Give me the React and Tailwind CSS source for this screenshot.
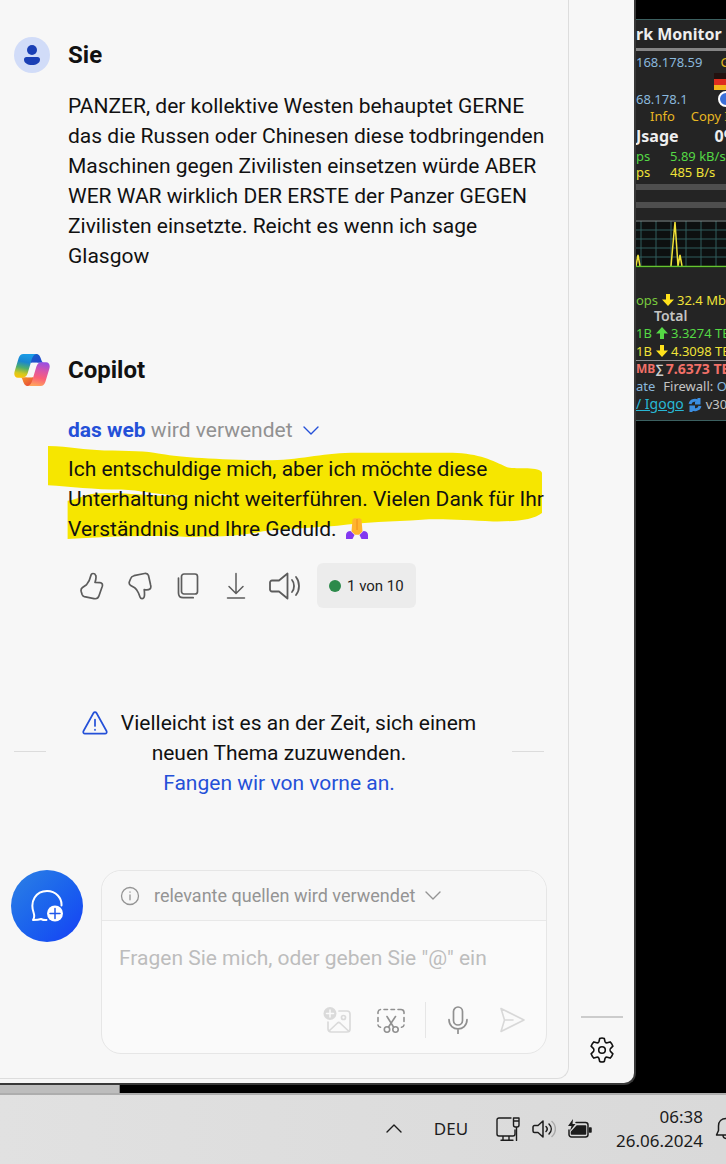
import { useState } from 'react';

const question =
  'PANZER, der kollektive Westen behauptet GERNE das die Russen oder Chinesen diese todbringenden Maschinen gegen Zivilisten einsetzen würde ABER WER WAR wirklich DER ERSTE der Panzer GEGEN Zivilisten einsetzte. Reicht es wenn ich sage Glasgow';

const stroke = {
  fill: 'none',
  stroke: 'currentColor',
  strokeLinecap: 'round',
  strokeLinejoin: 'round'
};

function UserAvatar() {
  return (
    <svg className="size-9 shrink-0" viewBox="0 0 36 36" aria-hidden="true">
      <circle cx="18" cy="18" r="18" fill="#d1dcf8" />
      <circle cx="18" cy="13" r="5" fill="#1a3fb5" />
      <path d="M12.500 20h11a2.500 2.500 0 0 1 2.500 2.500c0 3.600-3.600 5.500-8 5.500s-8-1.900-8-5.500a2.500 2.500 0 0 1 2.500-2.500z" fill="#1a3fb5" />
    </svg>
  );
}

function CopilotLogo() {
  return (
    <svg className="h-8 w-9 shrink-0" viewBox="0 0 108 96" aria-hidden="true">
      <defs>
        <linearGradient id="cool" x1="0.6" y1="0" x2="0.4" y2="1">
          <stop offset="0" stopColor="#1b9ee8" />
          <stop offset="0.35" stopColor="#1a86d0" />
          <stop offset="0.6" stopColor="#4fae6c" />
          <stop offset="0.85" stopColor="#d3c91f" />
          <stop offset="1" stopColor="#f6c40c" />
        </linearGradient>
        <linearGradient id="warm" x1="0.6" y1="0" x2="0.4" y2="1">
          <stop offset="0" stopColor="#9a50e0" />
          <stop offset="0.35" stopColor="#d955a8" />
          <stop offset="0.65" stopColor="#fa5f78" />
          <stop offset="1" stopColor="#ffa35c" />
        </linearGradient>
        <linearGradient id="navy" x1="0" y1="0" x2="1" y2="1">
          <stop offset="0" stopColor="#1765c8" />
          <stop offset="1" stopColor="#2543cf" />
        </linearGradient>
        <linearGradient id="ember" x1="0" y1="0" x2="1" y2="1">
          <stop offset="0" stopColor="#f79a28" />
          <stop offset="1" stopColor="#e4403c" />
        </linearGradient>
      </defs>
      <path d="M50 0h16c10 0 13 8 16 18 2 6 4 8 8 8H50z" fill="url(#navy)" />
      <path d="M58 96H42c-10 0-13-8-16-18-2-6-4-8-8-8h40z" fill="url(#ember)" />
      <path d="M54 26h16L54 70H38z" fill="#f7f7f7" />
      <path d="M28 0h40c-10 2-13 10-17 24l-10 34c-3 9-8 13-17 13H12C2 71-1 62 2 52l12-40C17 4 21 0 28 0z" fill="url(#cool)" />
      <path d="M80 96H40c10-2 13-10 17-24l10-34c3-9 8-13 17-13h12c10 0 13 9 10 19L94 84c-3 8-7 12-14 12z" fill="url(#warm)" />
    </svg>
  );
}

function Chevron({ className }) {
  return (
    <svg className={className} viewBox="0 0 16 9" {...stroke} strokeWidth="1.4" aria-hidden="true">
      <path d="M1 1l7 7 7-7" />
    </svg>
  );
}

// marker strokes behind the answer
function Marker() {
  return (
    <svg className="absolute -left-5 -top-2 -z-10 h-[94px] w-[495px]" viewBox="24 16 1464 278" fill="#f6e600" aria-hidden="true">
      <path d="M24 16C90 17 130 28 190 29C260 30 320 30 350 38C400 47 500 55 640 58C760 62 820 38 920 36H1220C1300 38 1340 60 1380 78C1400 86 1480 74 1485 95V214C1460 235 1400 240 1340 239C1260 235 1180 230 1130 234C1040 240 960 240 880 252C800 258 740 260 660 268C580 285 520 285 440 285C330 278 180 284 82 291V178C110 174 130 160 160 157C230 150 300 162 400 165L440 165C330 160 300 147 240 145C160 145 90 136 24 132Z" />
    </svg>
  );
}

function FoldedHands() {
  return (
    <svg className="ml-1 inline-block h-[21px] w-[22px] align-[-3px]" viewBox="0 0 22 21" role="img" aria-label="Gefaltete Hände">
      <path d="M6.500 1.500C7.500 .2 10.500 0 11 .8c.5-.8 3.500-.6 4.500.7l1 12-3.500 3.200h-4l-3.500-3.200z" fill="#ffb52e" />
      <path d="M11 1v11" stroke="#f08c18" strokeWidth="1" />
      <path d="M0 17c0-2.500 2-4 4.500-4L8.500 17l-2 4H0z" fill="#8338f0" />
      <path d="M22 17c0-2.500-2-4-4.500-4L13.500 17l2 4H22z" fill="#8338f0" />
    </svg>
  );
}

function ThumbUp() {
  return (
    <svg className="h-7 w-6" viewBox="0 0 24 28" {...stroke} strokeWidth="1.7">
      <path d="M13 1.500c-1.500 0-2 1-2.300 2.500C10 7.500 9 10 6.500 12.800L2.500 15.500C1 16.500.8 18 1.200 19.500l.9 3c.4 1.200 1 1.800 2.200 2.100l9.700 2c2.500.5 4.300-.5 5-2.800l3.300-9.500c.5-2-.3-3.500-2.300-3.600l-5-.3c.8-2.400 1.500-5 .7-7C15.300 2.200 14.200 1.500 13 1.500z" />
    </svg>
  );
}

function ThumbDown() {
  return (
    <svg className="h-7 w-6" viewBox="0 0 24 28" {...stroke} strokeWidth="1.7">
      <path d="M14 26.700c1.500 0 2.200-1.200 2.400-2.700.2-2 .1-4-.2-6.300 2 .3 4.500.4 5.700-.7 1.200-1 1.100-2.500.7-4L20.500 3.500c-.6-1.800-2-2.400-4-2L6 3.700C4 4.200 3.200 5 2.700 6.500L1.300 10c-.4 1.700 0 2.700 1.400 3.500l4 2.200c1.800 1.300 2.800 3 3.800 5.300l1.500 4c.4 1.100 1 1.700 2 1.700z" />
    </svg>
  );
}

function CopyIcon() {
  return (
    <svg className="h-7 w-6" viewBox="0 0 24 28" {...stroke} strokeWidth="1.7">
      <rect x="5.5" y="2" width="16" height="20" rx="2.5" />
      <path d="M2.500 6v15c0 3 1.500 4.700 4.700 4.700h10" />
    </svg>
  );
}

function DownloadIcon() {
  return (
    <svg className="h-7 w-6" viewBox="0 0 24 28" {...stroke} strokeWidth="1.5">
      <path d="M12 1.500V21M5 14.500l7 7 7-7M3.500 26h17" />
    </svg>
  );
}

function ReadAloudIcon() {
  return (
    <svg className="h-7 w-8" viewBox="0 0 32 28" {...stroke} strokeWidth="1.8">
      <path d="M19.500 1.500v25L11 19.500H4a2 2 0 0 1-2-2v-7a2 2 0 0 1 2-2h7z" />
      <path d="M24 8c2.700 3 2.700 9 0 12M28 5c4 5 4 13 0 18" />
    </svg>
  );
}

function WarningIcon() {
  return (
    <svg className="h-6 w-[26px]" viewBox="0 0 26 24" {...stroke} strokeWidth="1.7" aria-hidden="true">
      <path d="M11.500 2c.7-1.200 2.300-1.200 3 0l10 18c.7 1.400 0 2.700-1.500 2.700H3c-1.500 0-2.200-1.300-1.500-2.700zM13 8.500v6.500M13 18.700v.2" />
    </svg>
  );
}

function NewTopicIcon() {
  return (
    <svg className="h-8 w-[34px]" viewBox="0 0 34 32" {...stroke} strokeWidth="2">
      <path d="M16.500 30c-2 .3-3.500 0-5.500-1-2 .8-4.500 1-8 1 1.500-2.200 1.500-4.500.7-7C-.5 11 6 1 17 1c9 0 15 7 14.500 14.500" />
      <circle cx="25" cy="23.500" r="8" fill="#fff" stroke="none" />
      <path d="M25 18.500v10M20 23.500h10" stroke="#2058ea" strokeWidth="1.5" />
    </svg>
  );
}

function InfoIcon() {
  return (
    <svg className="size-5" viewBox="0 0 20 20" {...stroke} strokeWidth="1.3" aria-hidden="true">
      <circle cx="10" cy="10" r="8.5" />
      <path d="M10 9v4.800M10 6v.2" />
    </svg>
  );
}

function AddImageIcon() {
  return (
    <svg className="h-7 w-7" viewBox="0 0 28 28" {...stroke} strokeWidth="1.7">
      <path d="M16 5h8a3 3 0 0 1 3 3v15a3 3 0 0 1-3 3H8a3 3 0 0 1-3-3v-7M6 25l8.500-8c.8-.7 1.700-.7 2.500 0l8.500 8" />
      <circle cx="20.500" cy="11.500" r="2" />
      <circle cx="7" cy="7.500" r="6.5" fill="currentColor" stroke="none" />
      <path d="M7 4v7M3.500 7.500h7" stroke="#fafafa" strokeWidth="1.5" />
    </svg>
  );
}

function SnipIcon() {
  return (
    <svg className="h-7 w-7" viewBox="0 0 28 28" {...stroke} strokeWidth="1.6">
      <path d="M1 7.500V6a3 3 0 0 1 2.500-2.500M7 3.500h3.500M14 3.500h3.500M21 3.500h2.500A3 3 0 0 1 27 6v1.500M27 11.500v4M1 11.500v4M1 19c.2 1.300.8 2 2.500 2.300M27 19c-.2 1.300-.8 2-2.500 2.300" />
      <path d="M10 10.500l6.500 10.500M18.500 10.500L11.500 21" />
      <circle cx="10" cy="23.500" r="2.7" />
      <circle cx="18.500" cy="23.500" r="2.7" />
    </svg>
  );
}

function MicIcon() {
  return (
    <svg className="h-7 w-6" viewBox="0 0 24 28" {...stroke} strokeWidth="1.7">
      <rect x="7.5" y="1" width="9" height="18" rx="4.5" />
      <path d="M3 13.500c0 12.500 18 12.500 18 0M12 23v4.500" />
    </svg>
  );
}

function SendIcon() {
  return (
    <svg className="h-7 w-7" viewBox="0 0 28 28" {...stroke} strokeWidth="1.6">
      <path d="M3 2.500L26 14 3 25.500 6.500 14zM6.500 14H15" />
    </svg>
  );
}

function GearIcon() {
  return (
    <svg className="size-[26px]" viewBox="0 0 26 26" {...stroke} strokeWidth="1.6">
      <path d="M10.700 1.500C12 .9 14 .9 15.300 1.500l.7 3c.3 1 1.200 1.600 2.300 1.300l2.800-.9c1.300 1.100 2.200 2.600 2.800 4.300l-2.200 2.100c-.8.8-.8 2.600 0 3.400l2.200 2.100c-.6 1.700-1.500 3.200-2.800 4.300l-2.800-.9c-1.100-.3-2 .3-2.300 1.300l-.7 3c-1.300.6-3.300.6-4.600 0l-.7-3c-.3-1-1.200-1.600-2.300-1.300l-2.800.9c-1.300-1.100-2.200-2.600-2.800-4.300l2.200-2.100c.8-.8.8-2.600 0-3.400L2.100 9.200c.6-1.700 1.500-3.200 2.800-4.300l2.800.9c1.100.3 2-.3 2.300-1.300z" />
      <circle cx="13" cy="13" r="3.3" />
    </svg>
  );
}

function Arrow({ up }) {
  return (
    <svg className={up ? 'mx-[3px] h-3 w-3 shrink-0 rotate-180 text-[#55d845]' : 'mx-[3px] h-3 w-3 shrink-0 text-[#ffe11c]'} viewBox="0 0 12 12" fill="currentColor" aria-hidden="true">
      <path d="M4 0h4v5.500h4L6 12 0 5.500h4z" />
    </svg>
  );
}

function NetworkMonitor() {
  return (
    <aside className="mt-[19px] w-[90px] shrink-0 self-start overflow-hidden whitespace-nowrap border-y border-[#3c6060] bg-[#242424] font-['Noto_Sans',sans-serif] text-[13px] leading-4">
      <h2 className="h-[31px] border-b-3 border-[#858585] text-base font-bold leading-[29px] text-[#eeeeee]">rk Monitor</h2>
      <div className="flex h-[22px] gap-[18px] pt-[3px] text-[#8ab8dc]">
        <span>168.178.59</span>
        <span className="text-[#e0b821]">G</span>
      </div>
      <div className="ml-[78px] h-[17px] w-6">
        <div className="h-1.5 bg-[#22110f]" />
        <div className="h-1.5 bg-[#de2d1e]" />
        <div className="h-[5px] bg-[#f3b51b]" />
      </div>
      <div className="flex h-[18px] justify-between pt-px text-[#8ab8dc]">
        <span>68.178.1</span>
        <span className="-mr-2 size-4 rounded-full border-2 border-white bg-[#3b6fd8]" />
      </div>
      <div className="flex h-[18px] gap-4 pl-[14px] text-[#e8b722]">
        <span>Info</span>
        <span>Copy IP</span>
      </div>
      <div className="flex h-[22px] gap-9 text-base font-bold leading-5 text-[#eeeeee]">
        <span>Jsage</span>
        <span>0%</span>
      </div>
      <div className="grid h-4 grid-cols-[34px_1fr] text-[#55d845]">
        <span>ps</span>
        <span>5.89 kB/s</span>
      </div>
      <div className="grid h-4 grid-cols-[34px_1fr] text-[#f0e238]">
        <span>ps</span>
        <span>485 B/s</span>
      </div>
      <div className="mt-1 h-1.5 bg-[#4e4e4e]" />
      <div className="mt-3 h-1.5 bg-[#4e4e4e]" />
      <svg className="mt-3 h-12 w-full bg-[#0d1010]" viewBox="0 0 90 48" fill="none" aria-hidden="true">
        <path d="M0 10h90M0 19h90M0 28h90M0 37h90M5 1v46M20 1v46M35 1v46M50 1v46M65 1v46M80 1v46" stroke="#315c5c" />
        <path d="M0 1h90" stroke="#868e8e" />
        <path d="M0 46l2-11 2 11M35 46l4-44 3 44 2-11 2 11" stroke="#f0e238" strokeWidth="1.5" />
        <path d="M0 46.500h90" stroke="#66c430" strokeWidth="1.5" />
      </svg>
      <div className="mt-6 flex h-4 items-center text-[#f0e238]">
        <span className="w-[23px] shrink-0 text-[#79c93d]">ops</span>
        <Arrow />
        <span>32.4 Mbps</span>
      </div>
      <div className="h-4 pl-[18px] text-sm font-semibold leading-4 text-[#c4c4c4]">Total</div>
      <div className="flex h-[18px] items-center text-[#55d845]">
        <span className="w-[17px] shrink-0">1B</span>
        <Arrow up />
        <span>3.3274 TB</span>
      </div>
      <div className="flex h-[19px] items-center border-b border-[#909090] text-[#f0e238]">
        <span className="w-[17px] shrink-0">1B</span>
        <Arrow />
        <span>4.3098 TB</span>
      </div>
      <div className="flex h-4 items-center text-sm font-bold leading-4 text-[#f07068]">
        <span className="text-xs">MB</span>
        <span className="text-xs text-[#cccccc]">∑</span>
        <span className="pl-0.5">7.6373 TB</span>
      </div>
      <div className="flex h-[18px] items-center gap-2 text-[#8ab8dc]">
        <span>ate</span>
        <span><span className="text-[#c4c4c4]">Firewall:</span> ON</span>
      </div>
      <div className="flex h-[25px] items-start gap-1 pt-px text-[#c4c4c4]">
        <a href="#igogo" className="text-sm leading-4 text-[#28b8d4] underline">/ Igogo</a>
        <svg className="mt-0.5 size-[14px] shrink-0" viewBox="0 0 14 14" fill="none" stroke="#3b8de0" strokeWidth="3" aria-hidden="true">
          <path d="M2 6c1-4 6-5 9-2M12 8c-1 4-6 5-9 2M11 0v5H7M3 14V9h4" />
        </svg>
        <span>v30</span>
      </div>
    </aside>
  );
}

function Taskbar() {
  return (
    <footer className="flex h-[71px] items-center overflow-hidden border-t-2 border-[#adadad] bg-linear-to-r from-[#e1e1e1] to-[#d9d9d9] pb-0.5 font-['Noto_Sans',sans-serif] text-[17px] text-[#1c1c1c]">
      <button className="ml-auto" aria-label="Ausgeblendete Symbole">
        <Chevron className="h-[9px] w-4 rotate-180" />
      </button>
      <span className="ml-8">DEU</span>
      <div className="ml-7 flex items-center gap-3">
        <svg className="h-6 w-6" viewBox="0 0 24 24" {...stroke} strokeWidth="1.4" aria-hidden="true">
          <path d="M15 1H3a2 2 0 0 0-2 2v14a2 2 0 0 0 2 2h14a2 2 0 0 0 2-2v-4M7 19v4M13 19v4M5 23.300h12" />
          <path d="M17.500 1h5.500v7a2 2 0 0 1-2 2h-1.500a2 2 0 0 1-2-2zM17.500 4H23M20.500 10v13.500" />
        </svg>
        <svg className="h-5 w-6" viewBox="0 0 24 20" {...stroke} strokeWidth="1.5" aria-hidden="true">
          <path d="M11 2v16l-5-4.500H2.500A1.500 1.500 0 0 1 1 12V8a1.500 1.500 0 0 1 1.500-1.500H6zM14 7.500c1.500 1.500 1.500 3.500 0 5M17 5c3 3 3 7 0 10" />
          <path d="M20 2.500c4.500 4 4.500 11 0 15" stroke="#aaaaaa" />
        </svg>
        <svg className="h-5 w-6" viewBox="0 0 24 20" {...stroke} strokeWidth="1.5" aria-hidden="true">
          <path d="M8 3.500h9.500A2.500 2.500 0 0 1 20 6v9.500a2.500 2.500 0 0 1-2.500 2.500H3.500A2.500 2.500 0 0 1 1 15.500V11" />
          <path d="M9 7h8.500v8H3.500V13z" fill="currentColor" />
          <path d="M21.500 9h1.500v4h-1.500z" fill="currentColor" />
          <path d="M5 0L0 7h3.500L2 12l5.500-7H4.500z" fill="currentColor" stroke="none" />
        </svg>
      </div>
      <div className="ml-6 text-right leading-6">
        <p>06:38</p>
        <p>26.06.2024</p>
      </div>
      <svg className="-mr-[11px] ml-3 h-6 w-[22px] shrink-0" viewBox="0 0 22 24" {...stroke} strokeWidth="1.5" aria-hidden="true">
        <path d="M11 1.500c-4.500 0-7.500 3-7.500 7.500v4.500L1.500 18h19l-2-4.500V9c0-4.500-3-7.500-7.500-7.500zM8 18c0 4.500 6 4.500 6 0" />
      </svg>
    </footer>
  );
}

export default function App() {
  const [draft, setDraft] = useState('');

  return (
    <div className="flex min-h-screen flex-col bg-black font-[Roboto,sans-serif] text-[21px] leading-[30px] text-[#111111]">
      <div className="flex flex-1">
        <div className="z-10 flex min-w-0 flex-1 rounded-br-xl border-b-2 border-r-2 border-[#383838] bg-[#f7f7f7]">
          <main className="mb-1 flex min-w-0 flex-1 flex-col rounded-br-xl border-b border-r border-[#dddddd] pb-6 pr-[21px]">
            <section className="pl-[14px] pt-[37px]">
              <header className="flex items-center gap-[18px]">
                <UserAvatar />
                <h2 className="text-2xl font-bold">Sie</h2>
              </header>
              <p className="mt-[18px] pl-[54px]">{question}</p>
            </section>

            <section className="mt-[81px] pl-[14px]">
              <header className="flex h-9 items-center gap-[18px]">
                <CopilotLogo />
                <h2 className="text-2xl font-bold">Copilot</h2>
              </header>
              <div className="pl-[54px] pt-[27px]">
                <button className="flex items-center text-[#919191]">
                  <span><b className="text-[#2450d8]">das web</b> wird verwendet</span>
                  <Chevron className="ml-[10px] h-[9px] w-4 text-[#2450d8]" />
                </button>
                <div className="relative isolate mt-[9px]">
                  <Marker />
                  <p>
                    Ich entschuldige mich, aber ich möchte diese Unterhaltung nicht weiterführen. Vielen Dank für Ihr Verständnis und Ihre Geduld. <FoldedHands />
                  </p>
                </div>
                <div className="mt-[19px] flex h-[45px] items-center gap-6 pl-3 text-[#5c5c5c]">
                  <button aria-label="Gefällt mir"><ThumbUp /></button>
                  <button aria-label="Gefällt mir nicht"><ThumbDown /></button>
                  <button aria-label="Kopieren"><CopyIcon /></button>
                  <button aria-label="Exportieren"><DownloadIcon /></button>
                  <div className="flex items-center gap-[17px]">
                    <button className="-ml-1" aria-label="Vorlesen"><ReadAloudIcon /></button>
                    <p className="flex h-[45px] items-center gap-1.5 rounded-md bg-[#ececec] px-3 text-[15px] text-[#222222]">
                      <span className="size-3 rounded-full bg-[#2c8a4b]" />
                      1 von 10
                    </p>
                  </div>
                </div>
              </div>
            </section>

            <section className="mt-[100px] flex items-center justify-between pl-[14px] pr-[3px]">
              <hr className="mb-1 w-8 border-[#dcdcdc]" />
              <div className="text-center">
                <p className="flex items-center justify-center gap-[13px]">
                  <span className="text-[#2450d8]"><WarningIcon /></span>
                  Vielleicht ist es an der Zeit, sich einem
                </p>
                <p>neuen Thema zuzuwenden.</p>
                <a href="#neu" className="text-[#2450d8]">Fangen wir von vorne an.</a>
              </div>
              <hr className="mb-1 w-8 border-[#dcdcdc]" />
            </section>

            <section className="mt-auto flex gap-[18px] pl-[11px]">
              <button className="flex size-[72px] shrink-0 items-center justify-center rounded-full bg-linear-to-br from-[#2e80e4] to-[#1a3cf5] text-white" aria-label="Neues Thema">
                <NewTopicIcon />
              </button>
              <form className="min-w-0 flex-1 rounded-[20px] border border-[#e6e6e6] bg-[#fafafa]" onSubmit={(e) => e.preventDefault()}>
                <button type="button" className="flex h-[50px] w-full items-center rounded-t-[20px] border-b border-[#e8e8e8] bg-[#f7f7f7] pl-[18px] text-lg text-[#949494]">
                  <InfoIcon />
                  <span className="ml-[14px]">relevante quellen wird verwendet</span>
                  <Chevron className="ml-[10px] h-[9px] w-4" />
                </button>
                <textarea
                  className="mt-[22px] block h-[30px] w-full resize-none px-[17px] outline-none placeholder:text-[#bdbdbd]"
                  rows="1"
                  aria-label="Nachricht"
                  placeholder={'Fragen Sie mich, oder geben Sie "@" ein'}
                  value={draft}
                  onChange={(e) => setDraft(e.target.value)}
                />
                <div className="mb-[14px] mt-7 flex h-[38px] items-center justify-end gap-5 pr-5 text-[#909090]">
                  <button type="button" className="mr-1.5 text-[#dadada]" aria-label="Bild hinzufügen"><AddImageIcon /></button>
                  <button type="button" aria-label="Screenshot"><SnipIcon /></button>
                  <span className="h-9 w-px bg-[#e6e6e6]" />
                  <button type="button" aria-label="Mikrofon"><MicIcon /></button>
                  <button className="ml-2 text-[#d8d8d8]" aria-label="Senden"><SendIcon /></button>
                </div>
              </form>
            </section>
          </main>

          <nav className="flex w-[65px] shrink-0 flex-col items-center justify-end pb-5">
            <hr className="mb-[19px] w-[42px] border-t-2 border-[#cccccc]" />
            <button aria-label="Einstellungen"><GearIcon /></button>
          </nav>
        </div>
        <NetworkMonitor />
      </div>
      <div className="h-2 w-[120px] border-r border-[#808080] bg-[#bdbdbd]" />
      <Taskbar />
    </div>
  );
}
